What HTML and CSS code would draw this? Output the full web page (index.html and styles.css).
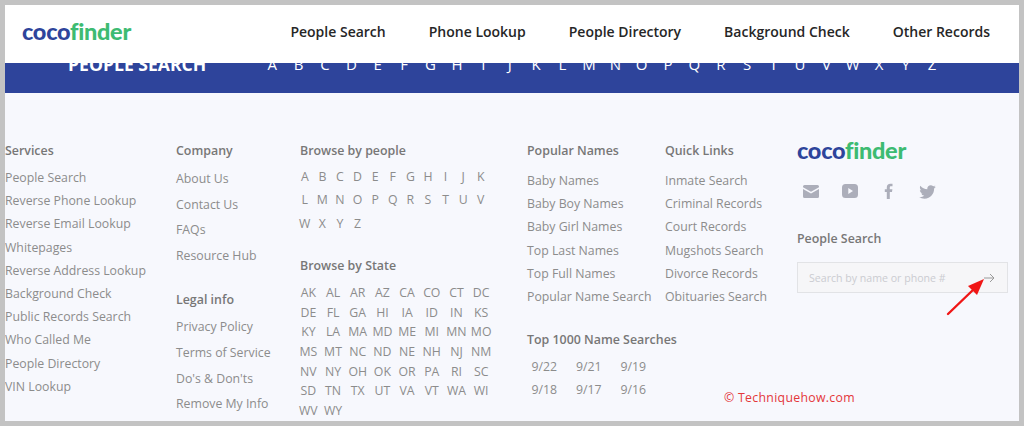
FILE: index.html
```html
<!DOCTYPE html>
<html lang="en">
<head>
    <meta charset="UTF-8">
    <meta name="viewport" content="width=device-width, initial-scale=1.0">
    <title>CocoFinder Footer</title>
    <link rel="stylesheet" href="styles.css">
</head>
<body>
    <div class="page">
        <header class="topbar">
            <div class="logo"><span class="logo-blue">coco</span><span class="logo-green">finder</span></div>
            <nav class="topnav">
                <a>People Search</a>
                <a>Phone Lookup</a>
                <a>People Directory</a>
                <a>Background Check</a>
                <a>Other Records</a>
            </nav>
        </header>

        <div class="band">
            <div class="band-row">
                <div class="band-title">PEOPLE SEARCH</div>
                <div class="band-letters">
                    <span>A</span><span>B</span><span>C</span><span>D</span><span>E</span><span>F</span><span>G</span><span>H</span><span>I</span><span>J</span><span>K</span><span>L</span><span>M</span><span>N</span><span>O</span><span>P</span><span>Q</span><span>R</span><span>S</span><span>T</span><span>U</span><span>V</span><span>W</span><span>X</span><span>Y</span><span>Z</span>
                </div>
            </div>
        </div>

        <footer class="footer">
            <div class="col">
                <h4>Services</h4>
                <ul class="links links-tight">
                    <li>People Search</li>
                    <li>Reverse Phone Lookup</li>
                    <li>Reverse Email Lookup</li>
                    <li>Whitepages</li>
                    <li>Reverse Address Lookup</li>
                    <li>Background Check</li>
                    <li>Public Records Search</li>
                    <li>Who Called Me</li>
                    <li>People Directory</li>
                    <li>VIN Lookup</li>
                </ul>
            </div>

            <div class="col">
                <h4>Company</h4>
                <ul class="links links-wide">
                    <li>About Us</li>
                    <li>Contact Us</li>
                    <li>FAQs</li>
                    <li>Resource Hub</li>
                </ul>
                <h4 class="legal-title">Legal info</h4>
                <ul class="links links-wide">
                    <li>Privacy Policy</li>
                    <li>Terms of Service</li>
                    <li>Do's &amp; Don'ts</li>
                    <li>Remove My Info</li>
                </ul>
            </div>

            <div class="col">
                <h4>Browse by people</h4>
                <div class="letter-grid">
                    <span>A</span><span>B</span><span>C</span><span>D</span><span>E</span><span>F</span><span>G</span><span>H</span><span>I</span><span>J</span><span>K</span>
                    <span>L</span><span>M</span><span>N</span><span>O</span><span>P</span><span>Q</span><span>R</span><span>S</span><span>T</span><span>U</span><span>V</span>
                    <span>W</span><span>X</span><span>Y</span><span>Z</span>
                </div>
                <h4 class="state-title">Browse by State</h4>
                <div class="state-grid">
                    <span>AK</span><span>AL</span><span>AR</span><span>AZ</span><span>CA</span><span>CO</span><span>CT</span><span>DC</span>
                    <span>DE</span><span>FL</span><span>GA</span><span>HI</span><span>IA</span><span>ID</span><span>IN</span><span>KS</span>
                    <span>KY</span><span>LA</span><span>MA</span><span>MD</span><span>ME</span><span>MI</span><span>MN</span><span>MO</span>
                    <span>MS</span><span>MT</span><span>NC</span><span>ND</span><span>NE</span><span>NH</span><span>NJ</span><span>NM</span>
                    <span>NV</span><span>NY</span><span>OH</span><span>OK</span><span>OR</span><span>PA</span><span>RI</span><span>SC</span>
                    <span>SD</span><span>TN</span><span>TX</span><span>UT</span><span>VA</span><span>VT</span><span>WA</span><span>WI</span>
                    <span>WV</span><span>WY</span>
                </div>
            </div>

            <div class="col col-names">
                <div class="names-row">
                    <div class="names-col">
                        <h4>Popular Names</h4>
                        <ul class="links links-tight links-gap">
                            <li>Baby Names</li>
                            <li>Baby Boy Names</li>
                            <li>Baby Girl Names</li>
                            <li>Top Last Names</li>
                            <li>Top Full Names</li>
                            <li>Popular Name Search</li>
                        </ul>
                    </div>
                    <div class="quick-col">
                        <h4>Quick Links</h4>
                        <ul class="links links-tight links-gap">
                            <li>Inmate Search</li>
                            <li>Criminal Records</li>
                            <li>Court Records</li>
                            <li>Mugshots Search</li>
                            <li>Divorce Records</li>
                            <li>Obituaries Search</li>
                        </ul>
                    </div>
                </div>
                <h4 class="top-title">Top 1000 Name Searches</h4>
                <div class="date-grid">
                    <span>9/22</span><span>9/21</span><span>9/19</span>
                    <span>9/18</span><span>9/17</span><span>9/16</span>
                </div>
            </div>

            <div class="col">
                <div class="logo logo-small"><span class="logo-blue">coco</span><span class="logo-green">finder</span></div>
                <div class="social">
                    <svg viewBox="0 0 16 13" width="16" height="13"><path d="M1.500 0h13A1.500 1.500 0 0 1 16 1.500v.8L8 6.800 0 2.300v-.8A1.500 1.500 0 0 1 1.500 0z"/><path d="M0 4 8 8.500 16 4v7.500a1.500 1.500 0 0 1-1.500 1.500h-13A1.500 1.500 0 0 1 0 11.500z"/></svg>
                    <svg viewBox="0 0 16 14" width="16" height="14"><path fill-rule="evenodd" d="M3.500 0h9A3.500 3.500 0 0 1 16 3.500v7a3.500 3.500 0 0 1-3.500 3.500h-9A3.500 3.500 0 0 1 0 10.500v-7A3.500 3.500 0 0 1 3.500 0zM6.300 4v6l4.700-3z"/></svg>
                    <svg viewBox="0 0 16 16" width="16" height="16"><path d="M5.800 16V9H3.800V6.200h2V4.400C5.800 2 7.200.7 9.400.7c1 0 1.800.1 2.100.1v2.500h-1.400c-1.100 0-1.300.5-1.300 1.300v1.600h2.600L11 9H8.800v7z"/></svg>
                    <svg viewBox="0 0 24 24" width="19" height="19"><path d="M22.460 6c-.77.35-1.600.58-2.460.69.880-.53 1.560-1.370 1.880-2.380-.830.5-1.750.850-2.720 1.050C18.370 4.500 17.260 4 16 4c-2.350 0-4.270 1.920-4.270 4.290 0 .34.040.67.110.98C8.280 9.090 5.110 7.380 3 4.790c-.37.630-.58 1.370-.58 2.150 0 1.490.750 2.810 1.910 3.560-.71 0-1.370-.2-1.950-.5v.03c0 2.080 1.480 3.820 3.440 4.210a4.220 4.220 0 0 1-1.930.07 4.280 4.280 0 0 0 4 2.980 8.521 8.521 0 0 1-5.330 1.840c-.34 0-.68-.02-1.020-.06C3.440 20.290 5.700 21 8.120 21 16 21 20.330 14.460 20.330 8.790c0-.19 0-.37-.01-.56.840-.6 1.560-1.360 2.140-2.230z"/></svg>
                </div>
                <h4 class="search-title">People Search</h4>
                <div class="search-box">
                    <input type="text" placeholder="Search by name or phone #">
                    <svg viewBox="0 0 11 10" width="11" height="10" fill="none" stroke="#9a9a9a" stroke-width="1"><path d="M0 5h10M6 1l4 4-4 4"/></svg>
                </div>
            </div>
        </footer>

        <svg class="red-arrow" viewBox="0 0 40 40" width="40" height="40"><path d="M2 38 28 13" stroke="#f01616" stroke-width="2.400" stroke-linecap="round" fill="none"/><path d="M38 3 22 10l9 9z" fill="#f01616"/></svg>
        <div class="watermark">© Techniquehow.com</div>
    </div>
</body>
</html>
```

FILE: styles.css
```css
* {
    box-sizing: border-box;
}

html, body {
    height: 100%;
}

body {
    margin: 0;
    padding: 5px 5px 5px 5px;
    background-color: #c3c3c3;
    font-family: "Open Sans", Arial, sans-serif;
    overflow: hidden;
}

.page {
    position: relative;
    height: 416px;
    background-color: #f7f8fd;
    overflow: hidden;
}

.topbar {
    display: flex;
    align-items: center;
    justify-content: space-between;
    height: 58px;
    padding: 0 29px 6px 17px;
    background-color: #ffffff;
}

.logo {
    font-family: Lato, Arial, sans-serif;
    font-weight: 900;
    font-size: 23.5px;
    line-height: 28px;
    letter-spacing: -0.3px;
}

.logo-blue {
    color: #2e449b;
}

.logo-green {
    color: #3dbb72;
}

.topnav {
    display: flex;
    gap: 43px;
}

.topnav a {
    font-size: 14px;
    font-weight: 600;
    color: #262626;
}

.band {
    height: 30px;
    background-color: #2e449b;
    overflow: hidden;
}

.band-row {
    display: flex;
    align-items: center;
    height: 20px;
    margin-top: -9px;
    padding-left: 63px;
    color: #ffffff;
}

.band-title {
    width: 191px;
    font-size: 17.6px;
    font-weight: 700;
}

.band-letters {
    display: grid;
    grid-template-columns: repeat(26, 26.4px);
    font-size: 15px;
    text-align: center;
}

.footer {
    display: grid;
    grid-template-columns: 171px 124px 227px 270px 1fr;
    padding-top: 49px;
    font-size: 12.3px;
    color: #8c8c8c;
}

h4 {
    margin: 0;
    font-size: 12.4px;
    line-height: 18px;
    font-weight: 600;
    color: #777777;
}

.links {
    list-style: none;
    margin: 0;
    padding: 0;
    white-space: nowrap;
}

.links-tight {
    margin-top: 6px;
    line-height: 23.2px;
}

.links-gap {
    margin-top: 9px;
}

.links-wide {
    margin-top: 6px;
    line-height: 25.6px;
}

.legal-title {
    margin-top: 23px;
}

.legal-title + .links-wide {
    margin-top: 5px;
}

.letter-grid {
    display: grid;
    grid-template-columns: repeat(11, 17.6px);
    margin: 5px 0 0 -4px;
    line-height: 23.3px;
    text-align: center;
}

.state-title {
    margin-top: 22px;
}

.state-grid {
    display: grid;
    grid-template-columns: repeat(8, 24.7px);
    margin: 8px 0 0 -4px;
    line-height: 19.7px;
    text-align: center;
}

.names-row {
    display: flex;
}

.names-col {
    width: 138px;
}

.quick-col {
    width: 132px;
}

.top-title {
    margin-top: 23px;
}

.date-grid {
    display: grid;
    grid-template-columns: repeat(3, 44.5px);
    margin: 6px 0 0 -5px;
    line-height: 23.2px;
    text-align: center;
}

.logo-small {
    margin-top: -6px;
}

.social {
    display: grid;
    grid-template-columns: repeat(4, 39px);
    justify-items: center;
    align-items: center;
    height: 20px;
    margin: 17px 0 0 -6px;
    fill: #acaeba;
}

.search-title {
    margin-top: 29px;
}

.search-box {
    display: flex;
    align-items: center;
    justify-content: space-between;
    width: 211px;
    height: 31px;
    margin-top: 14px;
    padding: 0 12px 0 11px;
    background-color: #f6f6f8;
    border: 1px solid #e2e3e6;
}

.search-box input {
    flex: 1;
    min-width: 0;
    padding: 0;
    border: none;
    outline: none;
    background: transparent;
    font-family: inherit;
    font-size: 10.6px;
}

.search-box input::placeholder {
    color: #cbccd1;
    opacity: 1;
}

.red-arrow {
    position: absolute;
    left: 941px;
    top: 271px;
}

.watermark {
    position: absolute;
    left: 719px;
    top: 384px;
    font-size: 12.3px;
    line-height: 18px;
    letter-spacing: 0.3px;
    color: #e4373a;
}
```
